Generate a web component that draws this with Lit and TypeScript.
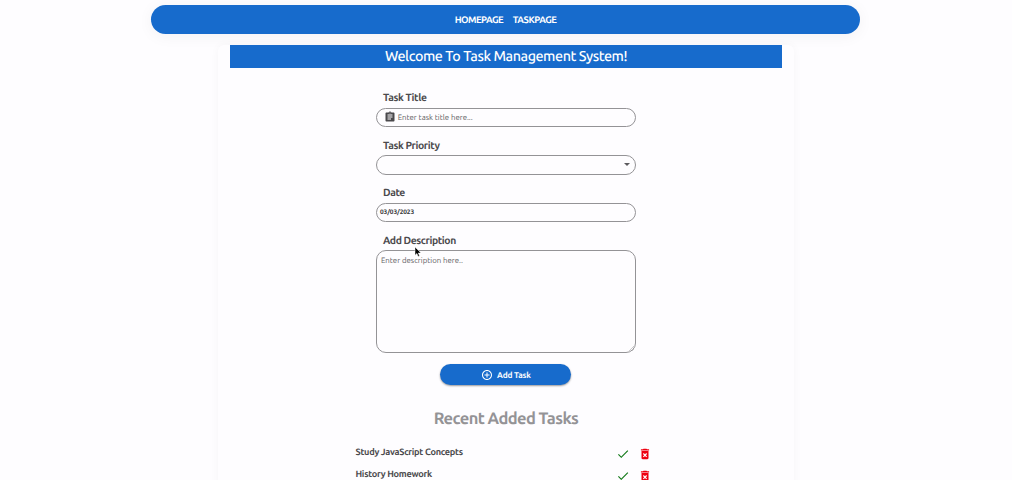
import { LitElement, html, css, svg } from "lit";
import { customElement } from "lit/decorators.js";

const clipboard = svg`<path d="M19 3h-4.18C14.4 1.84 13.3 1 12 1s-2.4.84-2.82 2H5c-1.1 0-2 .9-2 2v14c0 1.1.9 2 2 2h14c1.1 0 2-.9 2-2V5c0-1.1-.9-2-2-2zm-7 0c.55 0 1 .45 1 1s-.45 1-1 1-1-.45-1-1 .45-1 1-1zm2 14H7v-2h7v2zm3-4H7v-2h10v2zm0-4H7V7h10v2z"/>`;
const addCircle = svg`<path d="M13 7h-2v4H7v2h4v4h2v-4h4v-2h-4V7zm-1-5C6.48 2 2 6.48 2 12s4.48 10 10 10 10-4.48 10-10S17.52 2 12 2zm0 18c-4.41 0-8-3.59-8-8s3.59-8 8-8 8 3.59 8 8-3.59 8-8 8z"/>`;
const check = svg`<path d="M9 16.17 4.83 12l-1.42 1.41L9 19 21 7l-1.41-1.41z"/>`;
const trash = svg`<path d="M6 19c0 1.1.9 2 2 2h8c1.1 0 2-.9 2-2V7H6v12zm2.46-7.12 1.41-1.41L12 12.59l2.12-2.12 1.41 1.41L13.41 14l2.12 2.12-1.41 1.41L12 15.41l-2.12 2.12-1.41-1.41L10.59 14l-2.13-2.12zM15.5 4l-1-1h-5l-1 1H5v2h14V4z"/>`;

@customElement("app-root")
export class AppRoot extends LitElement {
  static styles = css`
    :host {
      display: block;
      position: relative;
      height: 480px;
      overflow: hidden;
      background: #fefdff;
      color: #4b4a4d;
      font-family: Ubuntu, "Noto Sans", "Open Sans", sans-serif;
      text-rendering: geometricPrecision;
    }
    * { box-sizing: border-box; }
    svg { display: block; fill: currentColor; flex: none; }
    nav {
      display: flex;
      justify-content: center;
      align-items: center;
      gap: 9.7px;
      width: 709px;
      height: 28.5px;
      margin: 5px 0 0 151px;
      border-radius: 15px;
      background: #176bcc;
      color: #fff;
      box-shadow: 0 2px 16px rgba(0, 0, 0, 0.05);
      font-size: 9.5px;
      font-weight: 700;
      letter-spacing: -0.52px;
      white-space: nowrap;
    }
    main {
      width: 576px;
      height: 560px;
      margin: 11.5px 0 0 218px;
      padding: 0 12px;
      border-radius: 6px;
      background: #fefdff;
      box-shadow: 0 0 10px rgba(0, 0, 0, 0.035);
    }
    h1 {
      margin: 0;
      height: 23px;
      line-height: 23px;
      background: #176bcc;
      color: #fff;
      font-size: 14.3px;
      font-weight: 500;
      letter-spacing: -0.43px;
      text-align: center;
      white-space: nowrap;
    }
    form { width: 260px; margin: 22px 0 0 146px; }
    .field { height: 47.5px; }
    label {
      display: block;
      height: 17.5px;
      padding-left: 7px;
      line-height: 15.5px;
      font-size: 10.4px;
      font-weight: 600;
      letter-spacing: -0.39px;
      white-space: nowrap;
    }
    .box {
      display: flex;
      align-items: center;
      height: 19.5px;
      border: 1px solid #949396;
      border-radius: 10px;
      font-size: 7.8px;
      white-space: nowrap;
    }
    .title { padding-left: 6.5px; gap: 2.2px; color: #4a494c; }
    .hint { color: #626164; padding-top: 1px; }
    .select { justify-content: flex-end; padding-right: 5.5px; }
    .arrow {
      border: 3px solid transparent;
      border-top: 3px solid #5c5b5e;
      border-bottom: 0;
    }
    .date { padding-left: 3px; color: #333235; font-size: 6.5px; font-weight: 600; letter-spacing: -0.08px; }
    .area {
      position: relative;
      height: 103px;
      padding: 4px 4px;
      align-items: flex-start;
      line-height: 11px;
    }
    .grip { position: absolute; right: 0; bottom: 0; color: #a8a7aa; }
    .grip path { fill: none; stroke: currentColor; stroke-width: 0.6; }
    .add {
      display: flex;
      align-items: center;
      justify-content: center;
      gap: 4px;
      width: 131px;
      height: 21px;
      margin: 11px 0 0 210.4px;
      border-radius: 11px;
      background: #176bcc;
      color: #fff;
      box-shadow: 0 1px 2px rgba(0, 0, 0, 0.4);
      font-size: 8.3px;
      font-weight: 700;
      letter-spacing: -0.2px;
      white-space: nowrap;
    }
    h2 {
      margin: 21px 0 0;
      height: 26px;
      line-height: 26px;
      color: #949396;
      font-size: 16.5px;
      font-weight: 600;
      letter-spacing: -0.58px;
      text-align: center;
      white-space: nowrap;
    }
    ul { list-style: none; margin: 9px 0 0 125.5px; padding: 0; width: 296px; }
    li {
      display: flex;
      height: 22px;
      align-items: center;
      font-size: 9.2px;
      font-weight: 600;
      letter-spacing: -0.29px;
      white-space: nowrap;
    }
    .name { flex: 1; padding-bottom: 1px; }
    .done { color: #147a1a; margin: 3px 8px 0 0; }
    .del { color: #ee0010; margin-top: 3px; }
    .cursor { position: absolute; left: 414px; top: 246px; }
  `;

  private icon(shape: unknown, size: number, cls = "") {
    return html`<svg class=${cls} width=${size} height=${size} viewBox="0 0 24 24">${shape}</svg>`;
  }

  render() {
    return html`
      <nav><span>HOMEPAGE</span><span>TASKPAGE</span></nav>
      <main>
        <h1>Welcome To Task Management System!</h1>
        <form>
          <div class="field">
            <label>Task Title</label>
            <div class="box title">${this.icon(clipboard, 12)}<span class="hint">Enter task title here...</span></div>
          </div>
          <div class="field">
            <label>Task Priority</label>
            <div class="box select"><i class="arrow"></i></div>
          </div>
          <div class="field">
            <label>Date</label>
            <div class="box date">03/03/2023</div>
          </div>
          <label>Add Description</label>
          <div class="box area">
            <span class="hint">Enter description here..</span>
            <svg class="grip" width="6" height="6" viewBox="0 0 6 6"><path d="M0 5 5 0M3 5 5 3" /></svg>
          </div>
        </form>
        <div class="add">${this.icon(addCircle, 12)}<span>Add Task</span></div>
        <h2>Recent Added Tasks</h2>
        <ul>
          ${["Study JavaScript Concepts", "History Homework"].map(
            (name) => html`<li>
              <span class="name">${name}</span>${this.icon(check, 14, "done")}${this.icon(trash, 14, "del")}
            </li>`
          )}
        </ul>
      </main>
      <svg class="cursor" width="7" height="12" viewBox="0 0 7 12">
        <path d="M1 1v8.2l1.9-1.7 1.2 3 1.4-.6-1.2-2.9H7z" fill="#000" stroke="#fff" stroke-width=".5" />
      </svg>
    `;
  }
}
